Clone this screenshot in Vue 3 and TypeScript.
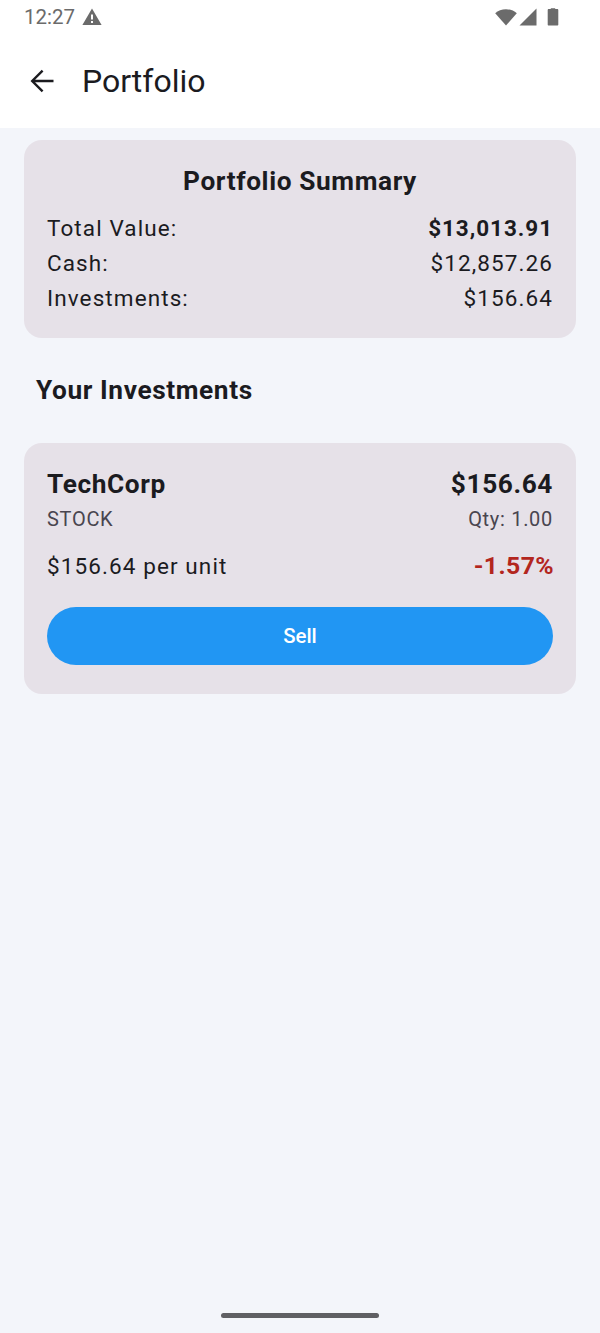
<template>
  <div class="screen">
    <header class="header">
      <div class="status-bar">
        <div class="status-left">
          <span class="clock">12:27</span>
          <svg class="alert" width="20" height="18" viewBox="0 0 20 18">
            <path fill="#6b6b6b" fill-rule="evenodd" d="M10 0.5 19.6 17H0.4ZM9 6.5V11.5H11V6.5ZM9 13V15H11V13Z" />
          </svg>
        </div>
        <div class="status-right">
          <svg class="wifi" width="22" height="18" viewBox="0 0 22 18">
            <path fill="#6b6b6b" d="M11 17.5 0.2 5.2C3 2.8 6.8 1.2 11 1.2s8 1.6 10.8 4Z" />
          </svg>
          <svg class="signal" width="18" height="18" viewBox="0 0 18 18">
            <path fill="#6b6b6b" d="M17.5 0.5V17.5H0.5Z" />
          </svg>
          <svg width="12" height="18" viewBox="0 0 12 18">
            <path fill="#6b6b6b" d="M3.8 1V0.3H8.2V1H10.2C10.9 1 11.3 1.4 11.3 2.1V16.4C11.3 17.1 10.9 17.5 10.2 17.5H1.8C1.1 17.5 0.7 17.1 0.7 16.4V2.1C0.7 1.4 1.1 1 1.8 1Z" />
          </svg>
        </div>
      </div>
      <div class="toolbar">
        <svg class="back" width="24" height="24" viewBox="0 0 24 24">
          <path fill="none" stroke="#1b1b1f" stroke-width="2.4" d="M23.5 12H2.5M12.6 1.6 2.2 12l10.4 10.4" />
        </svg>
        <h1 class="title">Portfolio</h1>
      </div>
    </header>

    <main class="content">
      <section class="card summary">
        <h2 class="summary-title">Portfolio Summary</h2>
        <div v-for="row in summaryRows" :key="row.label" class="summary-row">
          <span>{{ row.label }}</span>
          <span :class="{ strong: row.strong }">{{ row.value }}</span>
        </div>
      </section>

      <h2 class="section-title">Your Investments</h2>

      <section class="card investment">
        <div class="row">
          <span class="name">{{ investment.name }}</span>
          <span class="name">{{ investment.total }}</span>
        </div>
        <div class="row sub">
          <span>{{ investment.type }}</span>
          <span>Qty: {{ investment.qty }}</span>
        </div>
        <div class="row unit">
          <span>{{ investment.total }} per unit</span>
          <span class="change">{{ investment.change }}</span>
        </div>
        <button class="sell" type="button">Sell</button>
      </section>
    </main>

    <div class="home-indicator"></div>
  </div>
</template>

<script setup lang="ts">
const summaryRows = [
  { label: 'Total Value:', value: '$13,013.91', strong: true },
  { label: 'Cash:', value: '$12,857.26', strong: false },
  { label: 'Investments:', value: '$156.64', strong: false },
];

const investment = {
  name: 'TechCorp',
  total: '$156.64',
  type: 'STOCK',
  qty: '1.00',
  change: '-1.57%',
};
</script>

<style>
body {
  background: #f3f5fa;
}
</style>

<style scoped>
.screen {
  position: relative;
  width: 600px;
  height: 1333px;
  overflow: hidden;
  background: #f3f5fa;
  color: #1b1b1f;
  font-family: Roboto, sans-serif;
}

/* Header */
.header {
  height: 128px;
  background: #fff;
}

.status-bar {
  display: flex;
  justify-content: space-between;
  align-items: center;
  height: 34px;
  padding: 0 41px 0 24px;
  color: #6b6b6b;
}

.status-left,
.status-right {
  display: flex;
  align-items: center;
}

.status-left {
  gap: 7px;
}

.wifi {
  margin-right: 2px;
}

.signal {
  margin-right: 10px;
}

.clock {
  font-size: 20.5px;
}

.toolbar {
  display: flex;
  align-items: center;
  height: 94px;
  padding-left: 30px;
}

.back {
  margin-right: 28px;
}

.title {
  margin: 0;
  font-size: 32px;
  font-weight: 400;
  line-height: 40px;
}

/* Content */
.content {
  padding: 12px 24px 0;
}

.card {
  background: #e6e1e8;
  border-radius: 18px;
  padding: 0 23px;
}

.summary {
  height: 198px;
  padding-top: 25px;
  box-sizing: border-box;
}

.summary-title {
  margin: 0 0 13px;
  font-size: 26.25px;
  font-weight: 700;
  line-height: 33px;
  letter-spacing: 0.6px;
  text-align: center;
}

.summary-row {
  display: flex;
  justify-content: space-between;
  height: 35px;
  font-size: 22.5px;
  line-height: 35px;
  letter-spacing: 1.1px;
}

.strong {
  font-weight: 700;
  letter-spacing: 0.95px;
}

.section-title {
  margin: 36px 0 36px 12px;
  font-size: 26.25px;
  font-weight: 700;
  line-height: 33px;
  letter-spacing: 0.6px;
}

.investment {
  height: 251px;
  padding-top: 25px;
  box-sizing: border-box;
}

.row {
  display: flex;
  justify-content: space-between;
}

.name {
  font-size: 26.25px;
  font-weight: 700;
  line-height: 33px;
  letter-spacing: 0.6px;
}

.sub {
  margin-top: 4px;
  color: #49454f;
  font-size: 20px;
  line-height: 28px;
  letter-spacing: 0.7px;
}

.unit {
  margin-top: 15px;
  align-items: center;
  font-size: 22.5px;
  line-height: 36px;
  letter-spacing: 1.1px;
}

.change {
  margin-right: -1px;
  color: #b3261e;
  font-size: 24.8px;
  font-weight: 700;
  letter-spacing: 0.4px;
}

.sell {
  display: block;
  width: 100%;
  height: 58px;
  margin-top: 23px;
  border: none;
  border-radius: 29px;
  background: #2196f3;
  color: #fff;
  font-family: inherit;
  font-size: 20.4px;
  font-weight: 500;
}

.home-indicator {
  position: absolute;
  left: 221px;
  bottom: 15px;
  width: 158px;
  height: 5px;
  border-radius: 3px;
  background: #5f5f63;
}
</style>
